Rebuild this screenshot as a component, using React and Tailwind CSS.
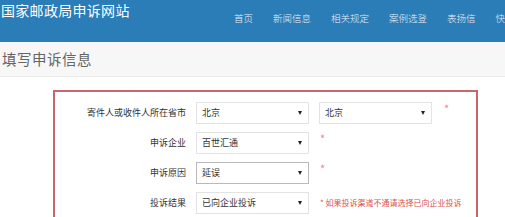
import React from "react";

const navItems = ["首页", "新闻信息", "相关规定", "案例选登", "表扬信", "快速查询"];

const Select = ({ value, strong }) => (
  <div
    className={`w-[113px] h-[22px] flex items-center justify-between pl-[5px] pr-[6px] bg-white border ${
      strong ? "border-[#b9b9b9]" : "border-[#e3e3e3]"
    }`}
  >
    <span className="text-[9px] text-[#333]">{value}</span>
    <span className="w-0 h-0 border-l-[2.5px] border-r-[2.5px] border-t-[4px] border-l-transparent border-r-transparent border-t-[#222]" />
  </div>
);

const Star = () => <span className="block text-[11px] leading-none text-[#e48a8a] -mt-[10px]">*</span>;

export default function App() {
  return (
    <div
      className="w-[505px] h-[217px] overflow-hidden bg-white"
      style={{ fontFamily: '"Noto Sans CJK SC", "Noto Sans", sans-serif' }}
    >
      {/* header */}
      <div className="h-[42px] bg-[#2a7db7] flex items-start relative overflow-hidden">
        <div className="text-white text-[14px] leading-none pl-[1px] pt-[3px] tracking-[0.3px]">
          国家邮政局申诉网站
        </div>
        <div className="absolute left-[234px] top-[14px] flex gap-[20px] whitespace-nowrap">
          {navItems.map((n) => (
            <span key={n} className="text-[9.5px] text-[#e6eef6] leading-none font-light">
              {n}
            </span>
          ))}
        </div>
      </div>

      {/* page title */}
      <div className="h-[35px] bg-[#f7f7f7] border-b border-[#ececec] flex items-center pl-[2px]">
        <span className="text-[14.5px] text-[#666] leading-none tracking-[0.5px]">填写申诉信息</span>
      </div>

      {/* form */}
      <div className="ml-[53px] mt-[13px] w-[425px] h-[140px] border-2 border-[#c8666b] pt-[10px]">
        <div className="flex flex-col gap-[8px]">
          <div className="flex items-center">
            <div className="w-[131px] text-right text-[9px] text-[#333]">寄件人或收件人所在省市</div>
            <div className="ml-[10px]">
              <Select value="北京" />
            </div>
            <div className="ml-[10px]">
              <Select value="北京" />
            </div>
            <div className="ml-[12px]">
              <Star />
            </div>
          </div>
          <div className="flex items-center">
            <div className="w-[131px] text-right text-[9px] text-[#333]">申诉企业</div>
            <div className="ml-[10px]">
              <Select value="百世汇通" />
            </div>
            <div className="ml-[11px]">
              <Star />
            </div>
          </div>
          <div className="flex items-center">
            <div className="w-[131px] text-right text-[9px] text-[#333]">申诉原因</div>
            <div className="ml-[10px]">
              <Select value="延误" strong />
            </div>
            <div className="ml-[11px]">
              <Star />
            </div>
          </div>
          <div className="flex items-center">
            <div className="w-[131px] text-right text-[9px] text-[#333]">投诉结果</div>
            <div className="ml-[10px]">
              <Select value="已向企业投诉" />
            </div>
            <div className="ml-[11px] text-[8px] text-[#d9534f] whitespace-nowrap">
              * 如果投诉渠道不通请选择已向企业投诉
            </div>
          </div>
        </div>
      </div>
    </div>
  );
}
